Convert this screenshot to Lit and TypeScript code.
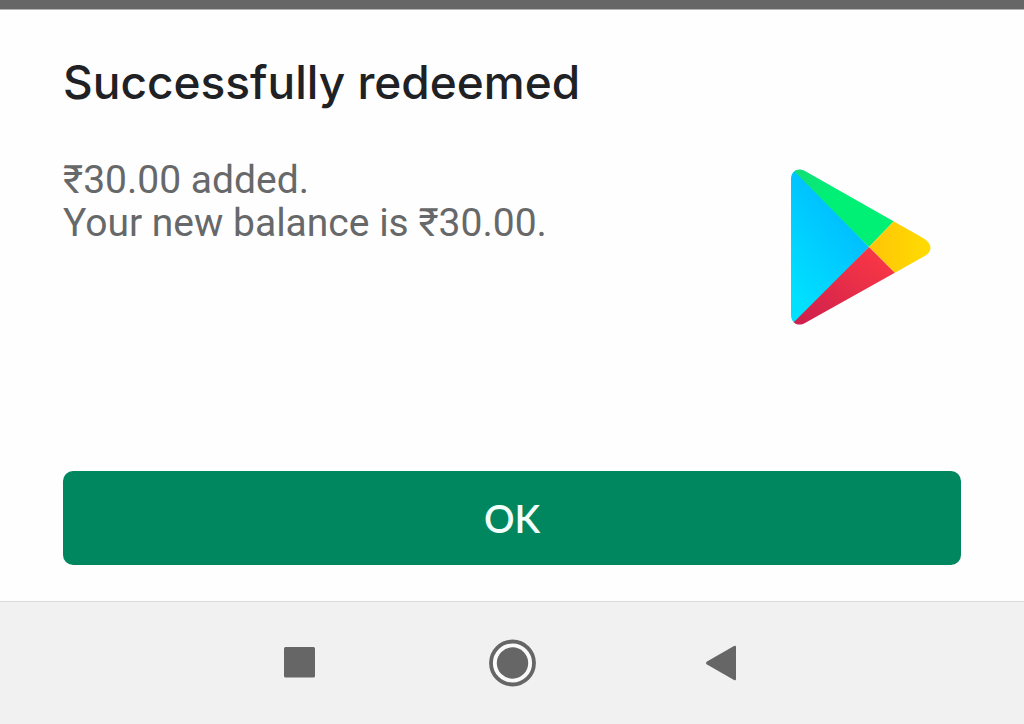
import { LitElement, html, css } from "lit";
import { customElement, property } from "lit/decorators.js";

@customElement("play-logo")
export class PlayLogo extends LitElement {
  static styles = css`
    :host { display: block; }
    .logo { display: block; width: 140px; height: 156px; }
  `;

  render() {
    return html`
      <svg class="logo" viewBox="0 0 140 156" role="img" aria-label="Google Play">
        <defs>
          <clipPath id="shape">
            <path d="M0 10C0 2 7-2 14 2L132 69C142 75 142 83 132 88L14 154C7 158 0 154 0 146Z" />
          </clipPath>
          <linearGradient id="blue" x1="0.7" y1="0.1" x2="0.2" y2="0.9">
            <stop offset="0" stop-color="#00b8ff" />
            <stop offset="1" stop-color="#00e0ff" />
          </linearGradient>
          <linearGradient id="green" x1="0" y1="0" x2="0.7" y2="0.7">
            <stop offset="0" stop-color="#16dd78" />
            <stop offset="0.5" stop-color="#00f076" />
          </linearGradient>
          <linearGradient id="yellow" x1="0" y1="0" x2="1" y2="0">
            <stop offset="0" stop-color="#ffc408" />
            <stop offset="1" stop-color="#ffdc00" />
          </linearGradient>
          <linearGradient id="red" x1="1" y1="0" x2="0" y2="1">
            <stop offset="0" stop-color="#ff3a44" />
            <stop offset="1" stop-color="#cc1f4d" />
          </linearGradient>
        </defs>
        <g clip-path="url(#shape)">
          <path fill="url(#blue)" d="M0 0H4L78 78L3 156H0Z" />
          <path fill="url(#green)" d="M3 2V0H30L103 52L78 78Z" />
          <path fill="url(#yellow)" d="M78 78L105 50L140 66V92L105 105Z" />
          <path fill="url(#red)" d="M78 78L104 104L30 156H2V154Z" />
        </g>
      </svg>
    `;
  }
}

@customElement("system-nav")
export class SystemNav extends LitElement {
  static styles = css`
    :host { display: block; }
    .bar {
      box-sizing: border-box;
      height: 100%;
      display: grid;
      grid-template-columns: repeat(3, 212px);
      justify-content: center;
      align-items: center;
      border-top: 1px solid #dcdcdc;
      background: #f1f1f1;
    }
    .key {
      justify-self: center;
      padding: 0;
      border: 0;
      background: none;
      color: #666666;
      cursor: pointer;
    }
    .glyph { display: block; width: 48px; height: 48px; fill: currentColor; }
  `;

  render() {
    return html`
      <nav class="bar" aria-label="System">
        <button class="key" aria-label="Recent apps">
          <svg class="glyph" viewBox="0 0 48 48"><rect x="8" y="8" width="31" height="30.500" rx="1.5" /></svg>
        </button>
        <button class="key" aria-label="Home">
          <svg class="glyph" viewBox="0 0 48 48">
            <circle cx="24.500" cy="24" r="21.5" fill="#fafafa" stroke="currentColor" stroke-width="3.8" />
            <circle cx="24.500" cy="24" r="15.7" />
          </svg>
        </button>
        <button class="key" aria-label="Back">
          <svg class="glyph" viewBox="0 0 48 48"><path d="M7 22.500L34 7Q36 6 36 8V40Q36 42 34 41L7 25.500Q5 24 7 22.500Z" /></svg>
        </button>
      </nav>
    `;
  }
}

@customElement("app-root")
export class AppRoot extends LitElement {
  @property() amount = "₹30.00";
  @property() balance = "₹30.00";

  static styles = css`
    :host {
      display: flex;
      flex-direction: column;
      min-height: 100vh;
      background: #fefefe;
      font-family: Roboto, "Noto Sans", sans-serif;
    }
    .scrim { height: 9px; background: #666666; border-bottom: 1px solid #b4b4b4; }
    .sheet {
      flex: 1;
      display: flex;
      flex-direction: column;
      padding: 40px 63px 36px;
    }
    .title {
      margin: 0;
      font-family: Inter, sans-serif;
      font-size: 46px;
      font-weight: 500;
      line-height: 64px;
      color: #202124;
    }
    .details {
      display: flex;
      justify-content: space-between;
      align-items: flex-start;
      padding: 45px 30px 0 0;
    }
    .message {
      margin: 0;
      font-size: 39px;
      line-height: 43px;
      color: #666869;
    }
    .art { margin-top: 10px; }
    .confirm {
      margin-top: auto;
      height: 94px;
      border: 0;
      border-radius: 10px;
      background: #01875f;
      color: #f2fffb;
      font-family: Lato, sans-serif;
      font-size: 38px;
      font-weight: 600;
      cursor: pointer;
    }
    .nav { height: 123px; }
  `;

  render() {
    return html`
      <div class="scrim"></div>
      <main class="sheet">
        <h1 class="title">Successfully redeemed</h1>
        <div class="details">
          <p class="message">${this.amount} added.<br />Your new balance is ${this.balance}.</p>
          <play-logo class="art"></play-logo>
        </div>
        <button class="confirm">OK</button>
      </main>
      <system-nav class="nav"></system-nav>
    `;
  }
}
